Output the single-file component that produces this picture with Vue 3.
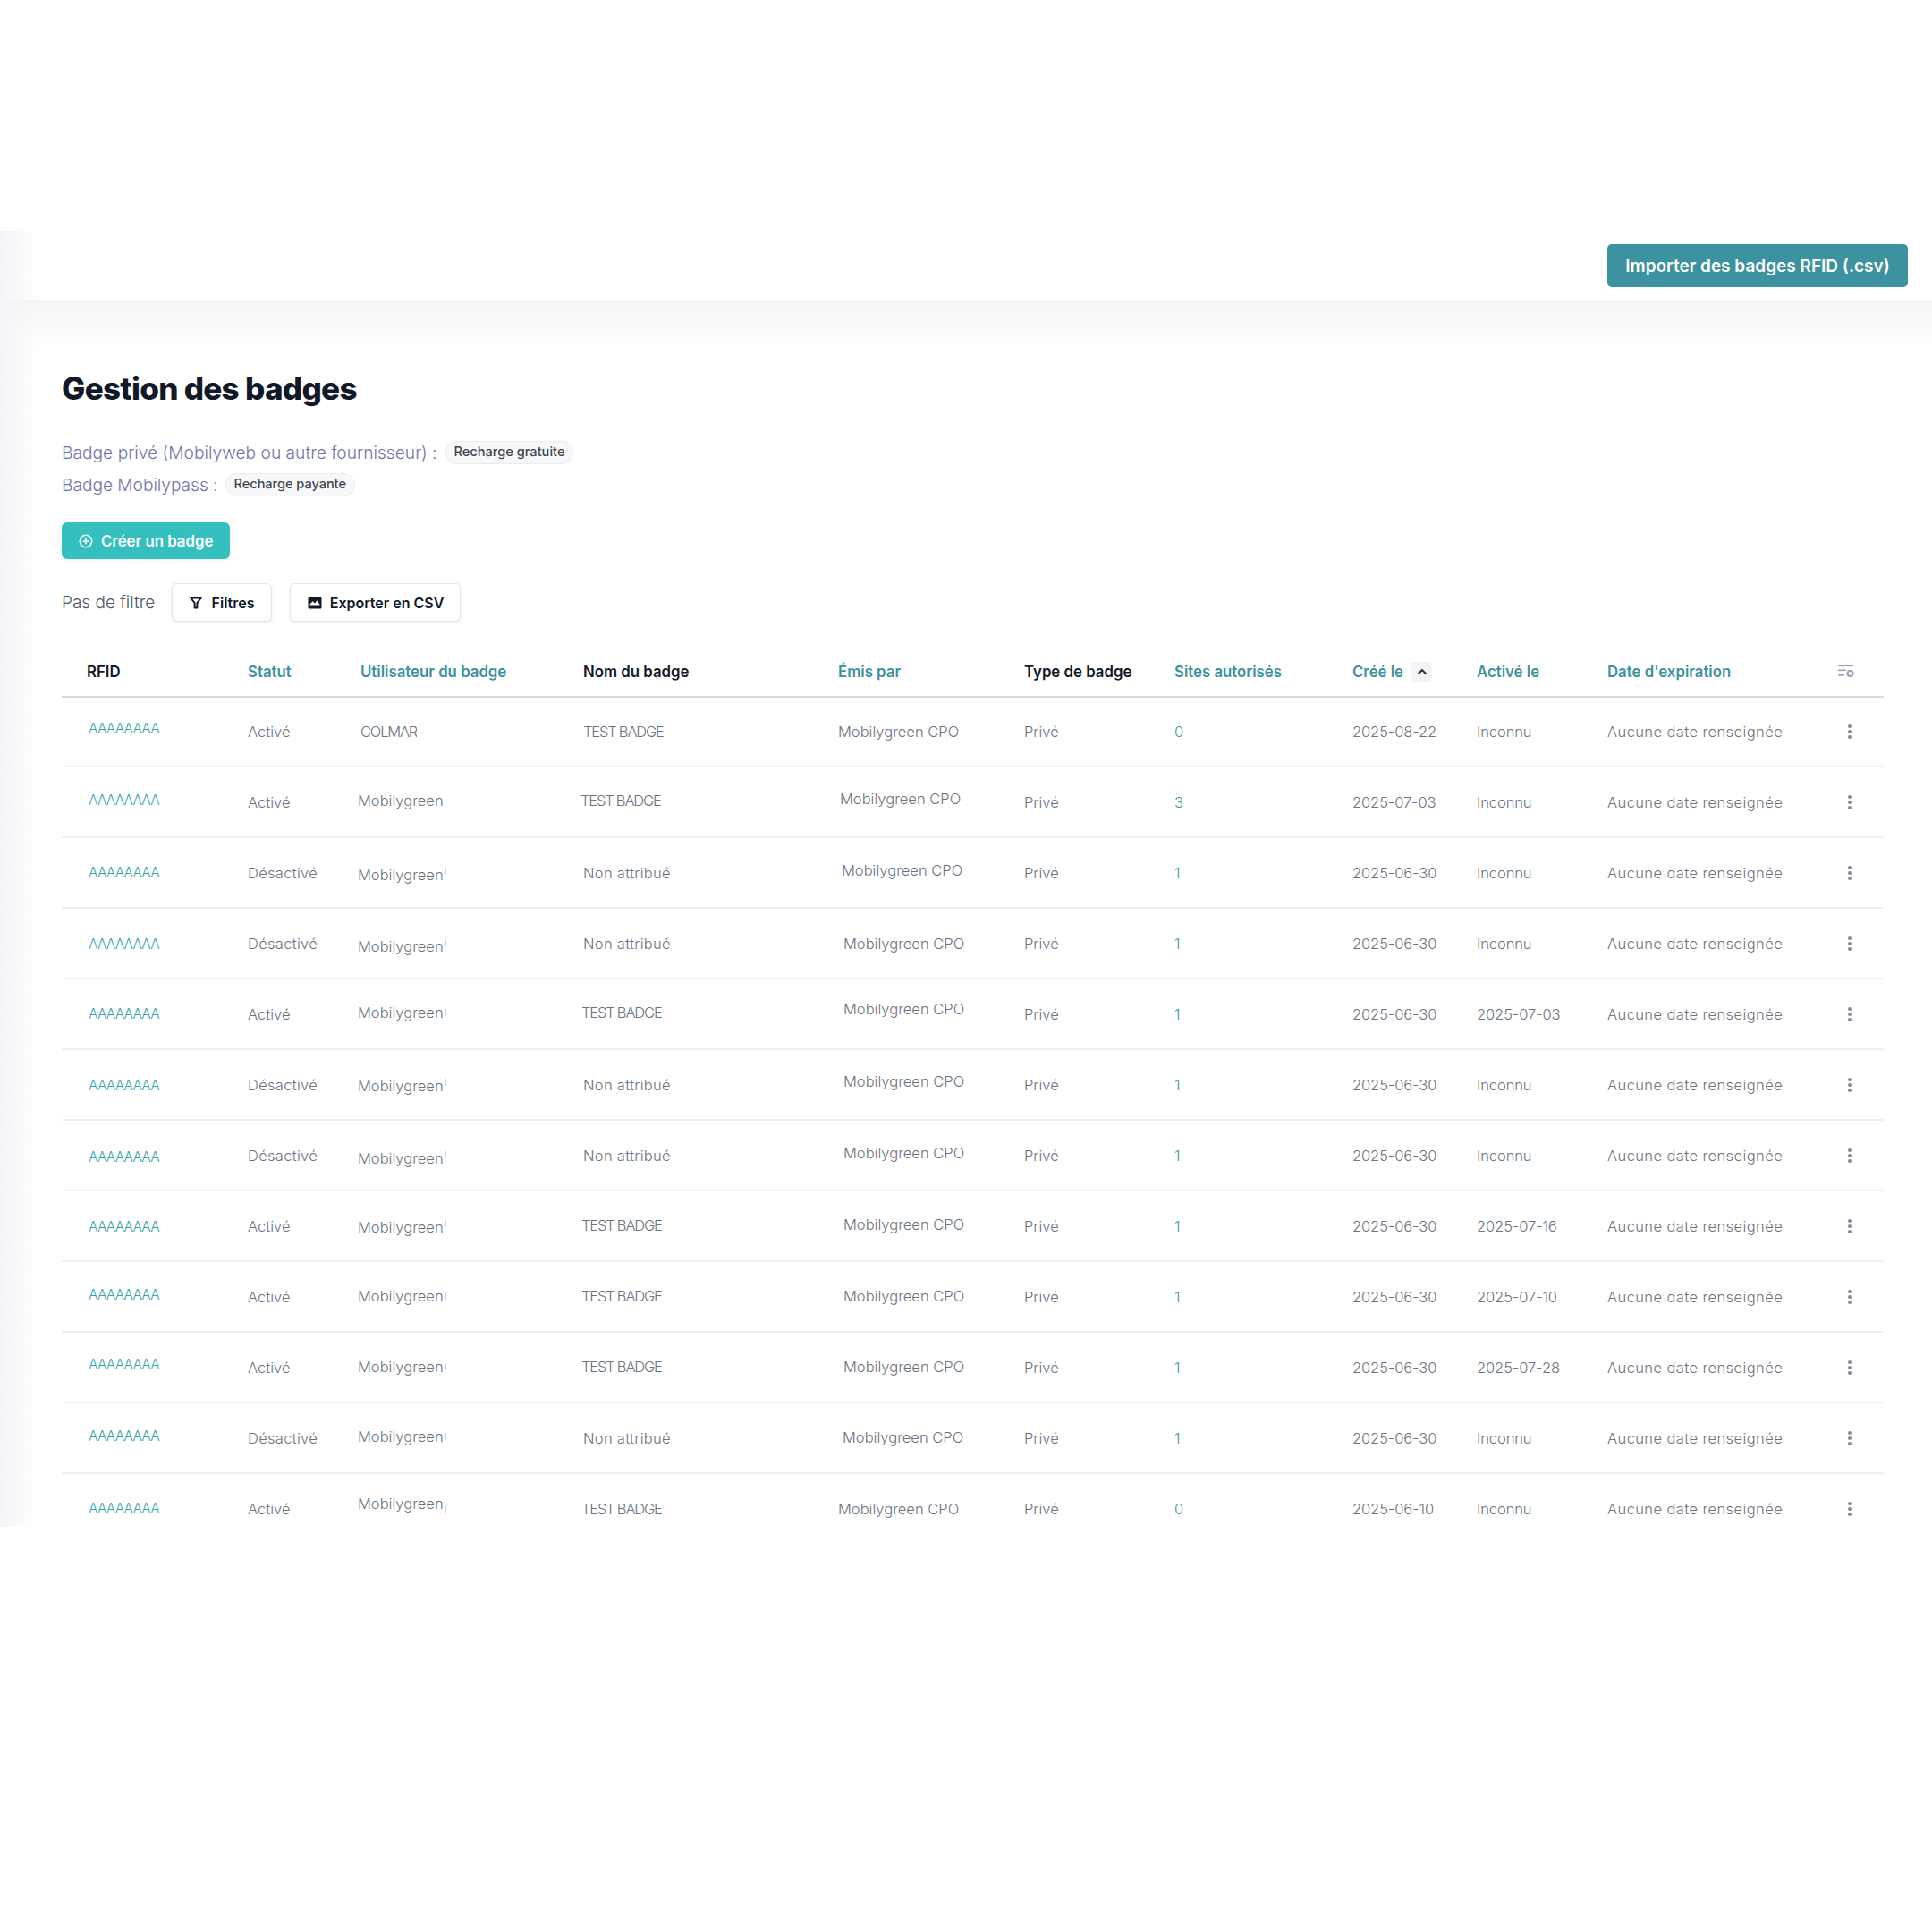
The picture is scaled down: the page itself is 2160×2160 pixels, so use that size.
<template>
  <div class="shell">
    <div class="topbar">
      <button class="import-btn">Importer des badges RFID (.csv)</button>
    </div>

    <div class="content">
      <h1>Gestion des badges</h1>

      <div class="legend">
        <div class="legend-line">
          <span>Badge privé (Mobilyweb ou autre fournisseur) :</span>
          <span class="pill">Recharge gratuite</span>
        </div>
        <div class="legend-line short">
          <span>Badge Mobilypass :</span>
          <span class="pill">Recharge payante</span>
        </div>
      </div>

      <button class="create-btn">
        <svg width="16" height="16" viewBox="0 0 16 16" fill="none" stroke="#fff" stroke-width="1.6">
          <circle cx="8" cy="8" r="6.7" />
          <path d="M8 4.8v6.4M4.8 8h6.4" />
        </svg>
        Créer un badge
      </button>

      <div class="filters">
        <span class="no-filter">Pas de filtre</span>
        <button class="tool-btn filter-btn">
          <svg width="14" height="14" viewBox="0 0 14 14" fill="none" stroke="#111827" stroke-width="2" stroke-linejoin="round">
            <path d="M1.2 1.4h11.6L8.4 7v5.6H5.6V7z" />
          </svg>
          Filtres
        </button>
        <button class="tool-btn export-btn">
          <svg width="16" height="14" viewBox="0 0 16 14">
            <rect x="0.5" y="0.5" width="15" height="13" rx="1.2" fill="#111827" />
            <path d="M2.5 8.8 5.6 5.2 8 7.6l2.4-3 3.1 4.2v.7H2.5z" fill="#fff" />
          </svg>
          Exporter en CSV
        </button>
      </div>

      <table class="badges">
        <colgroup>
          <col v-for="w in colWidths" :key="w.id" :style="{ width: w.px + 'px' }" />
        </colgroup>
        <thead>
          <tr>
            <th class="rfid-head">RFID</th>
            <th class="sortable">Statut</th>
            <th class="sortable">Utilisateur du badge</th>
            <th>Nom du badge</th>
            <th class="sortable">Émis par</th>
            <th>Type de badge</th>
            <th class="sortable">Sites autorisés</th>
            <th class="sortable">
              <span class="sorted">
                Créé le
                <span class="sort-chip">
                  <svg width="12" height="8" viewBox="0 0 12 8" fill="none" stroke="#1f2937" stroke-width="1.8">
                    <path d="M1.5 6.5 6 2l4.5 4.5" />
                  </svg>
                </span>
              </span>
            </th>
            <th class="sortable">Activé le</th>
            <th class="sortable">Date d'expiration</th>
            <th class="settings-head">
              <svg width="18" height="15" viewBox="0 0 18 15" fill="#9a9fb2">
                <rect x="0" y="0.5" width="17" height="1.6" />
                <rect x="0" y="5.5" width="9" height="1.6" />
                <rect x="0" y="11" width="7" height="1.6" />
                <circle cx="13.5" cy="10" r="3" fill="none" stroke="#9a9fb2" stroke-width="2" />
              </svg>
            </th>
          </tr>
        </thead>
        <tbody>
          <tr v-for="(row, i) in rows" :key="i">
            <td><div class="cell"><span class="rfid" :style="nudge(row.rfidY, 0)">AAAAAAAA</span></div></td>
            <td :class="{ wide: row.status === off }">{{ row.status }}</td>
            <td>
              <div class="cell">
                <span class="user" :class="{ clipped: row.sliver, caps: !row.sliver && row.user === 'COLMAR' }" :style="nudge(row.userY, row.userX)">{{ row.user }}<i v-if="row.sliver" class="sliver" :class="row.sliver"></i></span>
              </div>
            </td>
            <td><div class="cell"><span :class="{ caps: row.name === test, wide: row.name === none }" :style="nudge(row.nameY, row.nameX)">{{ row.name }}</span></div></td>
            <td><div class="cell"><span :style="nudge(row.issuerY, row.issuerX)">Mobilygreen CPO</span></div></td>
            <td>Privé</td>
            <td class="sites">{{ row.sites }}</td>
            <td class="date">{{ row.created }}</td>
            <td class="date">{{ row.activated }}</td>
            <td class="expiry">Aucune date renseignée</td>
            <td class="kebab">
              <svg width="6" height="18" viewBox="0 0 6 18" fill="#858a9e">
                <circle cx="3" cy="3" r="2" />
                <circle cx="3" cy="9" r="2" />
                <circle cx="3" cy="15" r="2" />
              </svg>
            </td>
          </tr>
        </tbody>
      </table>
    </div>
  </div>
</template>

<script setup>
const colWidths = [208, 126, 249, 285, 208, 168, 199, 139, 146, 243, 66].map((px, id) => ({ id, px }))

const on = 'Activé'
const off = 'Désactivé'
const test = 'TEST BADGE'
const none = 'Non attribué'
const mg = 'Mobilygreen'

// the reference cells sit slightly off the row line, hence the per-row shifts
const rows = [
  { rfidY: -4, status: on, user: 'COLMAR', userX: 0, userY: 0, name: test, nameX: 0, nameY: 0, issuerX: 0, issuerY: 0, sites: 0, created: '2025-08-22', activated: 'Inconnu' },
  { rfidY: -2, status: on, user: mg, userX: -3, userY: -2, name: test, nameX: -3, nameY: -2, issuerX: 2, issuerY: -4, sites: 3, created: '2025-07-03', activated: 'Inconnu' },
  { rfidY: 0, status: off, user: mg, sliver: 'up', userX: -3, userY: 2, name: none, nameX: 0, nameY: 0, issuerX: 4, issuerY: -3, sites: 1, created: '2025-06-30', activated: 'Inconnu' },
  { rfidY: 1, status: off, user: mg, sliver: 'up', userX: -3, userY: 3, name: none, nameX: 0, nameY: 0, issuerX: 6, issuerY: 0, sites: 1, created: '2025-06-30', activated: 'Inconnu' },
  { rfidY: 0, status: on, user: mg, sliver: 'mid', userX: -3, userY: -2, name: test, nameX: -2, nameY: -2, issuerX: 6, issuerY: -6, sites: 1, created: '2025-06-30', activated: '2025-07-03' },
  { rfidY: 1, status: off, user: mg, sliver: 'up', userX: -3, userY: 1, name: none, nameX: 0, nameY: 0, issuerX: 6, issuerY: -4, sites: 1, created: '2025-06-30', activated: 'Inconnu' },
  { rfidY: 2, status: off, user: mg, sliver: 'up', userX: -3, userY: 3, name: none, nameX: 0, nameY: 0, issuerX: 6, issuerY: -3, sites: 1, created: '2025-06-30', activated: 'Inconnu' },
  { rfidY: 1, status: on, user: mg, sliver: 'up', userX: -3, userY: 1, name: test, nameX: -2, nameY: -1, issuerX: 6, issuerY: -2, sites: 1, created: '2025-06-30', activated: '2025-07-16' },
  { rfidY: -2, status: on, user: mg, sliver: 'mid', userX: -3, userY: -1, name: test, nameX: -2, nameY: -1, issuerX: 6, issuerY: -1, sites: 1, created: '2025-06-30', activated: '2025-07-10' },
  { rfidY: -3, status: on, user: mg, sliver: 'mid', userX: -3, userY: -1, name: test, nameX: -2, nameY: -1, issuerX: 6, issuerY: -1, sites: 1, created: '2025-06-30', activated: '2025-07-28' },
  { rfidY: -2, status: off, user: mg, sliver: 'mid', userX: -3, userY: -2, name: none, nameX: 0, nameY: 0, issuerX: 5, issuerY: -1, sites: 1, created: '2025-06-30', activated: 'Inconnu' },
  { rfidY: 0, status: on, user: mg, sliver: 'down', userX: -3, userY: -6, name: test, nameX: -2, nameY: 0, issuerX: 0, issuerY: 0, sites: 0, created: '2025-06-10', activated: 'Inconnu' }
]

const nudge = (y, x) => ({ marginLeft: x + 'px', marginTop: y * 2 + 'px' })
</script>

<style>
html, body {
  background: #fff;
}
</style>

<style scoped>
.shell {
  margin-top: 258px;
  height: 1449px;
  overflow: hidden;
  font-family: Inter, "Liberation Sans", sans-serif;
  background: linear-gradient(90deg, #f3f4f9, #fff 42px);
}

.topbar {
  height: 77px;
  padding: 15px 27px 0 0;
  box-sizing: border-box;
  display: flex;
  justify-content: flex-end;
  align-items: flex-start;
}

.import-btn {
  width: 336px;
  height: 48px;
  border: none;
  border-radius: 5px;
  background: #3c929e;
  color: #fff;
  font: 600 19px Inter, sans-serif;
}

.content {
  padding: 78px 54px 0 69px;
  background: linear-gradient(#f4f5f7, rgba(255, 255, 255, 0)) top / 100% 55px no-repeat;
}

h1 {
  margin: 0;
  font-size: 35px;
  line-height: 42px;
  font-weight: 800;
  color: #111827;
  letter-spacing: -0.7px;
}

.legend {
  margin-top: 38px;
  display: flex;
  flex-direction: column;
  gap: 10px;
  font-size: 19.2px;
  font-weight: 300;
  color: #7176a8;
}

.legend-line {
  display: flex;
  align-items: center;
  gap: 9px;
  height: 26px;
}

.legend-line.short {
  gap: 8px;
  letter-spacing: -0.05px;
}

.pill {
  height: 26px;
  padding: 0 9px 2px;
  box-sizing: border-box;
  display: flex;
  align-items: center;
  border: 1px solid #e9ebf0;
  border-radius: 13px;
  background: #f7f8fa;
  font-size: 14.6px;
  font-weight: 500;
  color: #3f4450;
}

.create-btn {
  margin-top: 29px;
  width: 188px;
  height: 41px;
  padding: 0 0 0 19px;
  display: flex;
  align-items: center;
  gap: 9px;
  border: none;
  border-radius: 6px;
  background: #35c0bf;
  color: #fff;
  font: 600 16.8px Inter, sans-serif;
  box-shadow: 0 1px 2px rgba(17, 24, 39, 0.08);
}

.filters {
  margin-top: 27px;
  display: flex;
  align-items: center;
  height: 43px;
}

.no-filter {
  width: 123px;
  font-size: 19px;
  font-weight: 300;
  color: #4b5563;
}

.tool-btn {
  height: 43px;
  display: flex;
  align-items: center;
  justify-content: center;
  gap: 11px;
  border: 1px solid #e3e5ea;
  border-radius: 6px;
  background: #fff;
  color: #111827;
  font: 600 16px Inter, sans-serif;
  box-shadow: 0 1px 3px rgba(17, 24, 39, 0.1);
}

.filter-btn {
  width: 112px;
}

.export-btn {
  width: 191px;
  margin-left: 20px;
  gap: 9px;
  padding-right: 5px;
}

.badges {
  margin-top: 27px;
  width: 2037px;
  table-layout: fixed;
  border-collapse: separate;
  border-spacing: 0;
}

th {
  height: 54px;
  padding: 2px 0 0;
  text-align: left;
  font-size: 16.8px;
  font-weight: 600;
  color: #111827;
  white-space: nowrap;
  border-bottom: 2px solid #d8dae2;
}

th.sortable {
  color: #3c929e;
}

.rfid-head {
  padding-left: 28px;
}

.sorted {
  display: flex;
  align-items: center;
  gap: 9px;
}

.sort-chip {
  width: 23px;
  height: 22px;
  display: flex;
  align-items: center;
  justify-content: center;
  border-radius: 5px;
  background: #f3f4f7;
}

.settings-head {
  height: 52px;
  padding: 4px 0 0 15px;
}

td {
  height: 79px;
  box-sizing: border-box;
  padding: 0;
  font-size: 16.5px;
  font-weight: 300;
  color: #6b7280;
  white-space: nowrap;
  border-bottom: 2px solid #eeeff3;
}

tbody tr:first-child td {
  height: 78px;
}

/* fixed height so a row's shifted text moves inside it without resizing it */
.cell {
  height: 44px;
  display: flex;
  align-items: center;
}

td:first-child {
  padding-left: 30px;
}

.rfid {
  color: #2fa3a8;
  font-size: 15.5px;
  letter-spacing: -0.8px;
}

.caps {
  letter-spacing: -1.2px;
}

.wide {
  letter-spacing: 0.3px;
}

.user {
  position: relative;
  overflow: hidden;
}

.user.clipped {
  width: 99px;
}

.sliver {
  position: absolute;
  right: 0;
  width: 1.5px;
  height: 8px;
  background: #d3d5dd;
}

.sliver.up {
  top: 2px;
}

.sliver.mid {
  top: 6px;
}

.sliver.down {
  top: 12px;
}

.sites {
  color: #3c9aa6;
}

.date {
  letter-spacing: -0.1px;
}

.expiry {
  letter-spacing: 0.4px;
}

.kebab {
  padding-left: 25px;
  line-height: 0;
}
</style>
